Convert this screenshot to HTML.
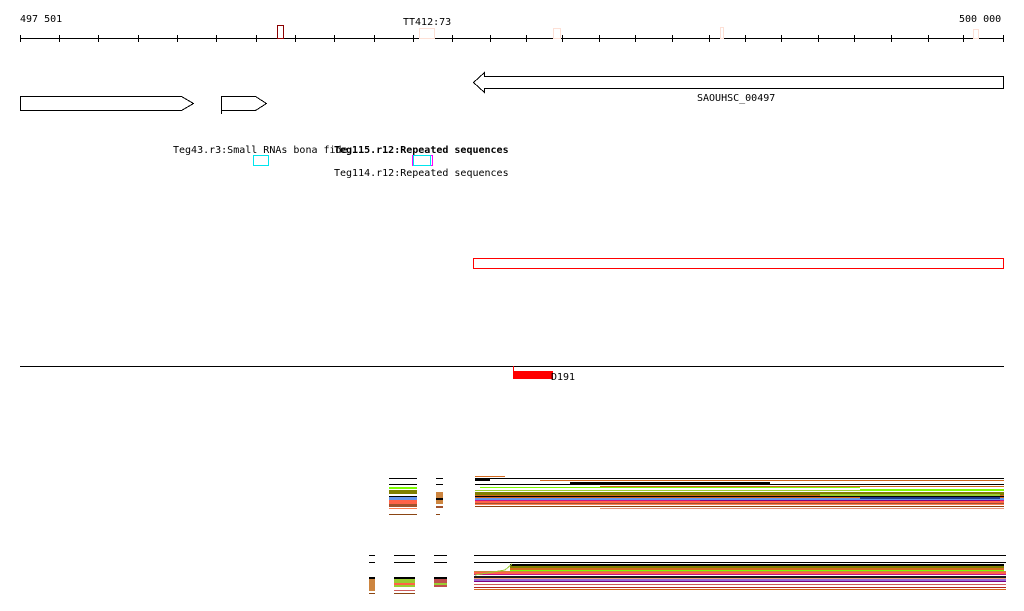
<!DOCTYPE html>
<html><head><meta charset="utf-8"><style>
html,body{margin:0;padding:0;background:#fff;width:1024px;height:611px;overflow:hidden}
svg{display:block}
text{font-family:"DejaVu Sans Mono","Liberation Mono",monospace;font-size:10px;fill:#000}
</style></head><body>
<svg width="1024" height="611" viewBox="0 0 1024 611" xmlns="http://www.w3.org/2000/svg" shape-rendering="crispEdges">
<text x="20" y="22">497 501</text>
<text x="403" y="25">TT412:73</text>
<text x="959" y="22">500 000</text>
<line x1="20" y1="38.5" x2="1004" y2="38.5" stroke="#000"/>
<g stroke="#000">
<path d="M20.5 35v7M59.5 35v7M98.5 35v7M138.5 35v7M177.5 35v7M216.5 35v7M256.5 35v7M295.5 35v7M334.5 35v7M374.5 35v7M413.5 35v7M452.5 35v7M490.5 35v7M526.5 35v7M562.5 35v7M599.5 35v7M635.5 35v7M672.5 35v7M709.5 35v7M745.5 35v7M781.5 35v7M818.5 35v7M854.5 35v7M891.5 35v7M928.5 35v7M963.5 35v7M1003.5 35v7"/>
</g>
<rect x="277.5" y="25.5" width="6" height="13" fill="none" stroke="#8b0000"/>
<rect x="419.5" y="28.5" width="15" height="10" fill="none" stroke="#fde0d6"/>
<rect x="553.5" y="28.5" width="7" height="10" fill="none" stroke="#fde0d6"/>
<rect x="720.5" y="27.5" width="3" height="11" fill="none" stroke="#fde0d6"/>
<rect x="973.5" y="29.5" width="5" height="9" fill="none" stroke="#fde0d6"/>
<path d="M20.5 96.5h161l12 7l-12 7h-161z" fill="none" stroke="#000"/>
<path d="M221.5 96.5h34l11 7l-11 7h-34z M221.5 96v18" fill="none" stroke="#000"/>
<path d="M1003.5 76.5H484.5v-4l-11 10l11 10v-4H1003.5z" fill="none" stroke="#000"/>
<text x="697" y="101">SAOUHSC_00497</text>
<text x="173" y="153">Teg43.r3:Small RNAs bona fide</text>
<text x="334" y="153" font-weight="bold">Teg115.r12:Repeated sequences</text>
<rect x="253.5" y="155.5" width="15" height="10" fill="none" stroke="#00e5ee"/>
<rect x="412.5" y="155.5" width="20" height="10" fill="none" stroke="#ff00ff"/>
<rect x="413.5" y="155.5" width="17" height="10" fill="none" stroke="#00e5ee"/>
<text x="334" y="176">Teg114.r12:Repeated sequences</text>
<rect x="473.5" y="258.5" width="530" height="10" fill="none" stroke="#f00"/>
<line x1="20" y1="366.5" x2="1004" y2="366.5" stroke="#000"/>
<line x1="513.5" y1="366" x2="513.5" y2="371" stroke="#f00"/>
<rect x="513" y="371" width="40" height="8" fill="#f00"/>
<text x="551" y="380">D191</text>
<!-- bundle 1 -->
<g>
<rect x="475" y="476" width="30" height="1" fill="#d2691e"/>
<rect x="475" y="478" width="529" height="1" fill="#000"/>
<rect x="475" y="479" width="15" height="2" fill="#000"/>
<rect x="540" y="480" width="464" height="1" fill="#d2691e"/>
<rect x="570" y="482" width="200" height="2" fill="#000"/>
<rect x="475" y="484" width="529" height="1" fill="#000"/>
<rect x="600" y="486" width="404" height="1" fill="#d2691e"/>
<rect x="480" y="487" width="380" height="1" fill="#7cfc00"/>
<rect x="860" y="489" width="144" height="2" fill="#7cfc00"/>
<rect x="475" y="490" width="385" height="1" fill="#9acd32"/>
<rect x="475" y="492" width="529" height="3" fill="#808000"/>
<rect x="475" y="495" width="529" height="1" fill="#d2691e"/>
<rect x="475" y="496" width="529" height="1" fill="#000"/>
<rect x="475" y="497" width="529" height="1" fill="#d2691e"/>
<rect x="475" y="498" width="529" height="2" fill="#6495ed"/>
<rect x="475" y="500" width="529" height="1" fill="#c71585"/>
<rect x="475" y="501" width="529" height="2" fill="#ff6347"/>
<rect x="475" y="503" width="529" height="1" fill="#a0522d"/>
<rect x="475" y="504" width="529" height="1" fill="#ff7f50"/>
<rect x="475" y="506" width="529" height="1" fill="#8b4513"/>
<rect x="600" y="508" width="404" height="1" fill="#e9967a"/>
<rect x="700" y="500" width="300" height="1" fill="#800080"/>
<rect x="820" y="494" width="180" height="2" fill="#9acd32"/>
<rect x="860" y="497" width="140" height="2" fill="#1e3a8a"/>
</g>
<!-- small chunks 1 -->
<g>
<rect x="389" y="478" width="28" height="1" fill="#000"/>
<rect x="389" y="484" width="28" height="1" fill="#000"/>
<rect x="389" y="487" width="28" height="2" fill="#7cfc00"/>
<rect x="389" y="490" width="28" height="4" fill="#808000"/>
<rect x="389" y="496" width="28" height="1" fill="#000"/>
<rect x="389" y="497" width="28" height="3" fill="#6495ed"/>
<rect x="389" y="500" width="28" height="4" fill="#ff6347"/>
<rect x="389" y="504" width="28" height="3" fill="#a0522d"/>
<rect x="389" y="508" width="28" height="1" fill="#ff7f50"/>
<rect x="389" y="514" width="28" height="1" fill="#8b4513"/>
<rect x="436" y="478" width="7" height="1" fill="#000"/>
<rect x="436" y="484" width="7" height="1" fill="#000"/>
<rect x="436" y="492" width="7" height="12" fill="#cd853f"/>
<rect x="436" y="498" width="7" height="2" fill="#000"/>
<rect x="436" y="506" width="7" height="2" fill="#a0522d"/>
<rect x="436" y="514" width="4" height="1" fill="#8b4513"/>
</g>
<!-- bundle 2 -->
<g>
<rect x="474" y="555" width="532" height="1" fill="#000"/>
<rect x="474" y="562" width="532" height="1" fill="#000"/>
<rect x="510" y="564" width="494" height="2" fill="#000"/>
<rect x="510" y="566" width="494" height="2" fill="#808000"/>
<rect x="510" y="568" width="494" height="2" fill="#d2691e"/>
<rect x="510" y="570" width="494" height="1" fill="#7cfc00"/>
<rect x="474" y="571" width="532" height="1" fill="#cd853f"/>
<rect x="474" y="572" width="532" height="2" fill="#ff6347"/>
<rect x="474" y="574" width="532" height="1" fill="#c71585"/>
<rect x="474" y="576" width="532" height="2" fill="#1a1a1a"/>
<rect x="474" y="578" width="532" height="1" fill="#ffa07a"/>
<rect x="474" y="579" width="532" height="2" fill="#9370db"/>
<rect x="474" y="581" width="532" height="1" fill="#800080"/>
<rect x="474" y="584" width="532" height="1" fill="#cd5c5c"/>
<rect x="474" y="587" width="532" height="1" fill="#b22222"/>
<rect x="474" y="589" width="532" height="1" fill="#d2691e"/>
<path d="M475 575L505 570L512 564" stroke="#9acd32" fill="none"/>
</g>
<g>
<rect x="369" y="555" width="6" height="1" fill="#000"/>
<rect x="369" y="562" width="6" height="1" fill="#000"/>
<rect x="369" y="577" width="6" height="14" fill="#cd853f"/>
<rect x="369" y="577" width="6" height="2" fill="#000"/>
<rect x="369" y="593" width="6" height="1" fill="#8b4513"/>
<rect x="394" y="555" width="21" height="1" fill="#000"/>
<rect x="394" y="562" width="21" height="1" fill="#000"/>
<rect x="394" y="577" width="21" height="2" fill="#000"/>
<rect x="394" y="579" width="21" height="8" fill="#9acd32"/>
<rect x="394" y="583" width="21" height="2" fill="#ff6347"/>
<rect x="394" y="590" width="21" height="1" fill="#cd5c5c"/>
<rect x="394" y="593" width="21" height="1" fill="#8b4513"/>
<rect x="434" y="555" width="13" height="1" fill="#000"/>
<rect x="434" y="562" width="13" height="1" fill="#000"/>
<rect x="434" y="577" width="13" height="10" fill="#c0504d"/>
<rect x="434" y="577" width="13" height="2" fill="#000"/>
<rect x="434" y="583" width="13" height="2" fill="#9acd32"/>
</g>
</svg>
</body></html>
